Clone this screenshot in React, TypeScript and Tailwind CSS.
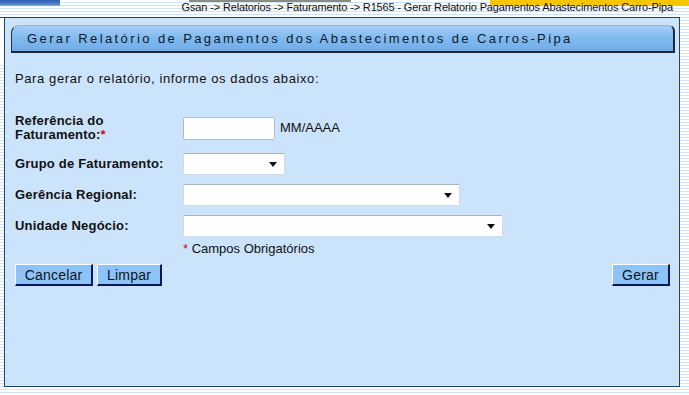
import React from "react";

const font = { fontFamily: '"Liberation Sans", Arial, sans-serif' };

const Arrow = () => (
  <svg width="8" height="5" viewBox="0 0 8 5" className="block">
    <path d="M0 0 L8 0 L4 5 Z" fill="#111" />
  </svg>
);

const SelectBox = ({ width }: { width: string }) => (
  <div
    className={`${width} h-[22px] bg-white border border-[#d2dbe4] border-t-[#a9b2bb] rounded-[2px] flex items-center justify-end pr-[7px]`}
  >
    <Arrow />
  </div>
);

const Btn = ({ label, className = "" }: { label: string; className?: string }) => (
  <button
    className={`h-[22px] bg-[#8ec3f7] border-t border-l border-t-white border-l-white border-r-2 border-b-2 border-r-[#0d1858] border-b-[#0d1858] text-[14px] tracking-[0.2px] text-[#0b1424] leading-none ${className}`}
  >
    {label}
  </button>
);

export default function App() {
  return (
    <div
      style={font}
      className="w-[689px] h-[395px] overflow-hidden bg-[repeating-linear-gradient(to_bottom,#ffffff_0px,#ffffff_2px,#cfe4f6_2px,#cfe4f6_3px)] text-[#111]"
    >
      {/* header with breadcrumb */}
      <div className="relative h-[17px]">
        <div className="absolute left-0 top-0 w-[60px] h-[6px] bg-[linear-gradient(to_bottom,#2f5ea6,#4f82c8_70%,#8fb3e0)]" />
        <div className="absolute left-[189px] top-0 w-[162px] h-[2px] bg-[#5a5a4a] opacity-70" />
        <div className="absolute left-[490px] top-0 right-0 h-[6px] bg-[#f7c600]" />
        <div className="relative flex justify-end pr-[16px] text-[11px] leading-[14px] tracking-[-0.15px] text-[#111]">
          Gsan -&gt; Relatorios -&gt; Faturamento -&gt; R1565 - Gerar Relatorio Pagamentos Abastecimentos Carro-Pipa
        </div>
      </div>

      <div className="flex">
        <div className="w-[4px]">
          <div className="h-[46px] bg-white border-t border-[#27435e]" />
        </div>

        {/* main panel */}
        <div className="w-[676px] h-[370px] bg-[#cbe4fc] border border-[#27435e] flex flex-col">
          <div className="mt-[7px] ml-[6px] mr-[4px] h-[28px] rounded-tl-[8px] rounded-tr-[6px] bg-[linear-gradient(to_bottom,#a2cdf6,#80b9f0_50%,#72ade9)] border-t border-t-[#9db4cc] border-l border-l-[#1f3248] border-r-2 border-r-[#1a2a3e] border-b-2 border-b-[#1a2a3e] flex items-center pl-[15px]">
            <span className="text-[13px] tracking-[2.4px] text-[#0d1a28]">
              Gerar Relatório de Pagamentos dos Abastecimentos de Carros-Pipa
            </span>
          </div>

          <div className="pl-[10px] pr-[9px] text-[13px]">
            <p className="mt-[19px] leading-[14px] tracking-[0.6px]">
              Para gerar o relatório, informe os dados abaixo:
            </p>

            <div className="mt-[28px] flex items-center h-[28px]">
              <div className="w-[168px] leading-[14px] font-bold tracking-[0.2px]">
                Referência do
                <br />
                Faturamento:<span className="text-[#d01010]">*</span>
              </div>
              <div className="w-[92px] h-[23px] bg-white border border-[#a9c0d6] rounded-[2px]" />
              <span className="ml-[5px]">MM/AAAA</span>
            </div>

            <div className="mt-[11px] flex items-center h-[22px]">
              <div className="w-[168px] font-bold tracking-[0.2px]">Grupo de Faturamento:</div>
              <SelectBox width="w-[102px]" />
            </div>

            <div className="mt-[9px] flex items-center h-[22px]">
              <div className="w-[168px] font-bold tracking-[0.2px]">Gerência Regional:</div>
              <SelectBox width="w-[277px]" />
            </div>

            <div className="mt-[9px] flex items-center h-[22px]">
              <div className="w-[168px] font-bold tracking-[0.2px]">Unidade Negócio:</div>
              <SelectBox width="w-[320px]" />
            </div>

            <p className="mt-[5px] ml-[168px] leading-[14px]">
              <span className="text-[#d01010]">*</span> Campos Obrigatórios
            </p>

            <div className="mt-[8px] flex justify-between">
              <div className="flex gap-[4px]">
                <Btn label="Cancelar" className="w-[78px]" />
                <Btn label="Limpar" className="w-[65px]" />
              </div>
              <Btn label="Gerar" className="w-[58px]" />
            </div>
          </div>
        </div>
      </div>
    </div>
  );
}
